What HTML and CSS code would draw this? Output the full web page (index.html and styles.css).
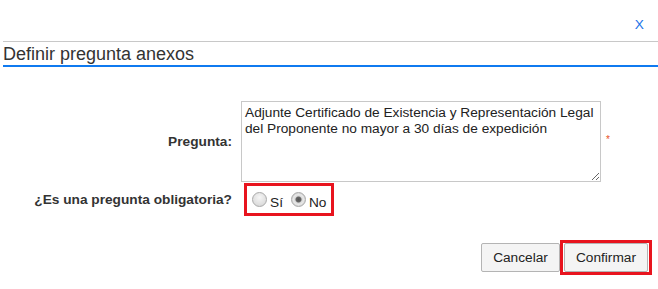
FILE: index.html
```html
<!DOCTYPE html>
<html lang="es">

<head>
  <meta charset="UTF-8">
  <meta name="viewport" content="width=device-width, initial-scale=1.0">
  <title>Definir pregunta anexos</title>
  <link rel="stylesheet" href="styles.css">
</head>

<body>
  <div class="modal">
    <div class="modal-top">
      <a class="close" href="#">X</a>
    </div>
    <h2 class="modal-title">Definir pregunta anexos</h2>

    <div class="form-grid">
      <label class="field-label" for="pregunta">Pregunta:</label>
      <div class="field">
        <textarea id="pregunta">Adjunte Certificado de Existencia y Representación Legal del Proponente no mayor a 30 días de expedición</textarea>
        <span class="required">*</span>
      </div>

      <span class="field-label">¿Es una pregunta obligatoria?</span>
      <div class="field">
        <div class="choices highlight">
          <input type="radio" name="obligatoria" id="si">
          <label class="choice-text" for="si">Sí</label>
          <input type="radio" name="obligatoria" id="no" checked>
          <label class="choice-text" for="no">No</label>
        </div>
      </div>
    </div>

    <div class="actions">
      <button class="btn">Cancelar</button>
      <div class="highlight confirm-wrap">
        <button class="btn">Confirmar</button>
      </div>
    </div>
  </div>
</body>

</html>
```

FILE: styles.css
```css
body {
  font-family: "Liberation Sans", Arial, sans-serif;
  font-size: 13.7px;
  color: #333;
  background-color: #fff;
  margin: 0;
  padding: 0;
}

.modal {
  margin-left: 3px;
}

.modal-top {
  height: 42px;
  box-sizing: border-box;
  padding: 17px 14px 0 0;
  display: flex;
  justify-content: flex-end;
  border-bottom: 1px solid #c8c8c8;
}

.close {
  color: #1a73e8;
  text-decoration: none;
  line-height: normal;
}

.modal-title {
  margin: 0;
  padding-top: 1px;
  font-size: 18px;
  font-weight: normal;
  line-height: 22px;
  color: #333;
  border-bottom: 2px solid #0f7af0;
}

.form-grid {
  display: grid;
  grid-template-columns: 229px 1fr;
  column-gap: 9px;
  row-gap: 1px;
  margin-top: 34px;
  align-items: center;
}

.field-label {
  font-weight: bold;
  text-align: right;
  padding-bottom: 1px;
}

.field {
  display: flex;
  align-items: center;
  gap: 5px;
}

textarea {
  width: 360px;
  height: 81px;
  box-sizing: border-box;
  margin: 0;
  padding: 3px 3px;
  border: 1px solid #c8c8c8;
  font-family: "Liberation Sans", Arial, sans-serif;
  font-size: 13.7px;
  line-height: 16px;
  color: #222;
}

.required {
  color: #e8501c;
  font-size: 10px;
  margin-top: -4px;
}

.highlight {
  border: 3px solid #e8141e;
}

.choices {
  margin-left: 3px;
  height: 27px;
  padding: 0 5px;
  display: flex;
  align-items: center;
}

.choices input {
  appearance: none;
  width: 15px;
  height: 15px;
  margin: 0 3px 0 0;
  border: 1px solid #a9a9a9;
  border-radius: 50%;
  background: radial-gradient(circle at 50% 35%, #f6f6f6, #d2d2d2);
  box-sizing: border-box;
}

.choices input:checked {
  background: radial-gradient(circle, #555 0, #666 2.5px, #d8d8d8 3.5px, #e8e8e8 5px, #cfcfcf 7px);
}

.choice-text {
  padding-top: 6px;
  margin-right: 8px;
  color: #222;
}

.choice-text:last-child {
  margin-right: 0;
}

.actions {
  display: flex;
  justify-content: flex-end;
  align-items: center;
  margin-top: 24px;
  padding-right: 6px;
}

.confirm-wrap {
  padding: 0 1px;
}

.btn {
  font-family: "Liberation Sans", Arial, sans-serif;
  font-size: 13.7px;
  line-height: 15px;
  padding: 6px 11px;
  color: #222;
  background-color: #f4f4f4;
  border: 1px solid #b4b4b4;
  border-radius: 2px;
  margin: 0;
}
```
